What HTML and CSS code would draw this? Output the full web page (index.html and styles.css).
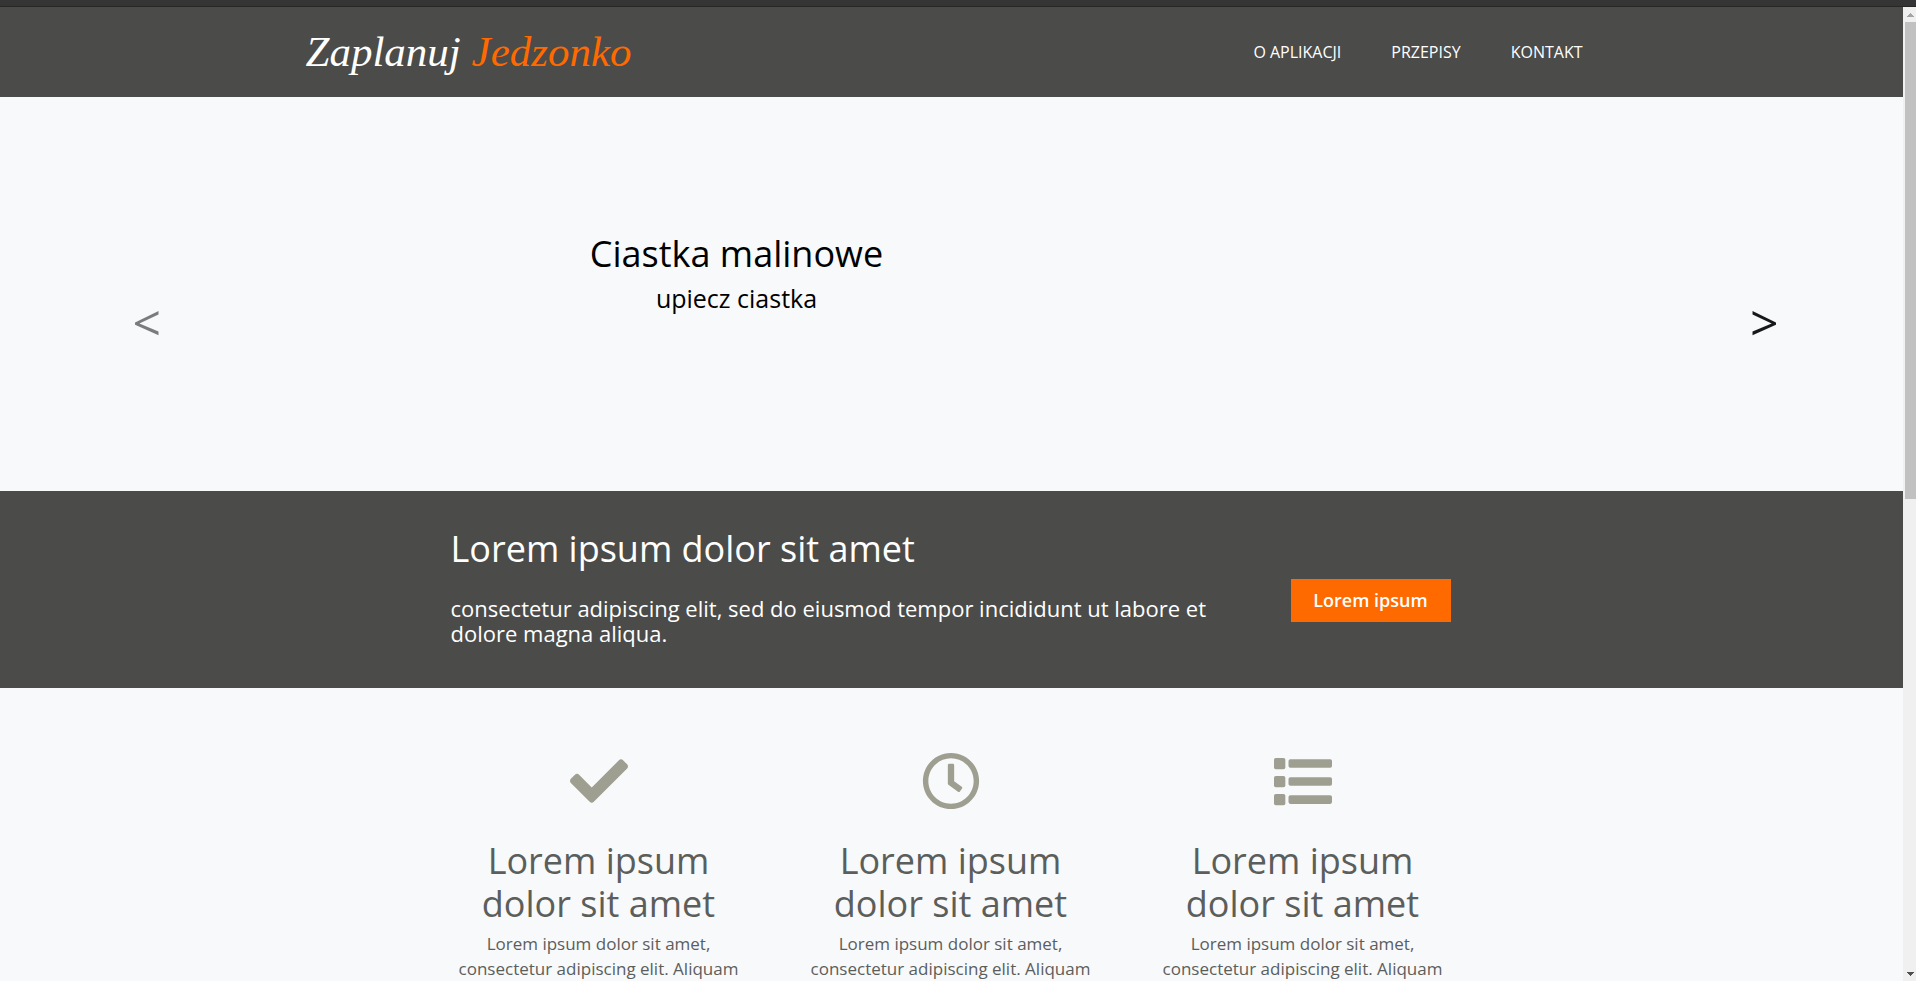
FILE: index.html
```html
<!DOCTYPE html>
<html lang="pl">
<head>
<meta charset="utf-8">
<title>Zaplanuj Jedzonko</title>
<link rel="stylesheet" href="styles.css">
</head>
<body>
<div class="window-edge"></div>
<div class="viewport">
  <div class="page">
    <header class="site-header">
      <div class="header-inner">
        <a class="logo" href="#">Zaplanuj <span class="logo-accent">Jedzonko</span></a>
        <nav class="main-nav">
          <a href="#about">O APLIKACJI</a>
          <a href="#recipes">PRZEPISY</a>
          <a href="#contact">KONTAKT</a>
        </nav>
      </div>
    </header>
    <section class="slider" id="recipes">
      <button class="slide-control slide-prev" type="button" aria-label="Poprzedni">&lt;</button>
      <div class="container slide">
        <div class="caption">
          <h1>Ciastka malinowe</h1>
          <p>upiecz ciastka</p>
        </div>
      </div>
      <button class="slide-control slide-next" type="button" aria-label="Następny">&gt;</button>
    </section>
    <section class="cta">
      <div class="container cta-inner">
        <div class="cta-text">
          <h2>Lorem ipsum dolor sit amet</h2>
          <p>consectetur adipiscing elit, sed do eiusmod tempor incididunt ut labore et dolore magna aliqua.</p>
        </div>
        <button class="cta-button" type="button">Lorem ipsum</button>
      </div>
    </section>
    <section class="about" id="about">
      <div class="container features">
        <article class="feature">
          <svg class="icon" viewBox="0 0 512 512" aria-hidden="true"><path d="M173.898 439.404l-166.4-166.4c-9.997-9.997-9.997-26.206 0-36.204l36.203-36.204c9.997-9.998 26.207-9.998 36.204 0L192 312.69 432.095 72.596c9.997-9.997 26.207-9.997 36.204 0l36.203 36.204c9.997 9.997 9.997 26.206 0 36.204l-294.4 294.401c-9.998 9.997-26.207 9.997-36.204-.001z"/></svg>
          <h2>Lorem ipsum dolor sit amet</h2>
          <p>Lorem ipsum dolor sit amet, consectetur adipiscing elit. Aliquam</p>
        </article>
        <article class="feature">
          <svg class="icon" viewBox="0 0 512 512" aria-hidden="true"><path d="M256 8C119 8 8 119 8 256s111 248 248 248 248-111 248-248S393 8 256 8zm0 448c-110.500 0-200-89.500-200-200S145.500 56 256 56s200 89.500 200 200-89.500 200-200 200zm61.800-104.400l-84.900-61.700c-3.100-2.300-4.900-5.900-4.900-9.700V116c0-6.600 5.400-12 12-12h32c6.600 0 12 5.400 12 12v141.700l66.800 48.600c5.400 3.900 6.500 11.400 2.600 16.800L334.600 349c-3.900 5.300-11.400 6.500-16.800 2.600z"/></svg>
          <h2>Lorem ipsum dolor sit amet</h2>
          <p>Lorem ipsum dolor sit amet, consectetur adipiscing elit. Aliquam</p>
        </article>
        <article class="feature">
          <svg class="icon" viewBox="0 0 512 512" aria-hidden="true"><rect x="0" y="52" width="100" height="100" rx="16"/><rect x="0" y="211" width="100" height="100" rx="16"/><rect x="0" y="370" width="100" height="100" rx="16"/><rect x="128" y="64" width="384" height="76" rx="16"/><rect x="128" y="223" width="384" height="76" rx="16"/><rect x="128" y="382" width="384" height="76" rx="16"/></svg>
          <h2>Lorem ipsum dolor sit amet</h2>
          <p>Lorem ipsum dolor sit amet, consectetur adipiscing elit. Aliquam</p>
        </article>
      </div>
    </section>
  </div>
  <div class="scrollbar" aria-hidden="true">
    <svg class="arrow arrow-up" viewBox="0 0 7 4" shape-rendering="crispEdges"><path d="M3 0h1v1h1v1h1v1h1v1H0V3h1V2h1V1h1z"/></svg>
    <div class="track"><div class="thumb"></div></div>
    <svg class="arrow arrow-down" viewBox="0 0 7 4" shape-rendering="crispEdges"><path d="M0 0h7v1H6v1H5v1H4v1H3V3H2V2H1V1H0z"/></svg>
  </div>
</div>
</body>
</html>
```
FILE: styles.css
```css
* {
  box-sizing: border-box;
}

body {
  margin: 0;
  height: 100vh;
  display: flex;
  flex-direction: column;
  overflow: hidden;
  background: #f8f9fb;
  font-family: "Open Sans", sans-serif;
}

h1, h2, p {
  margin: 0;
  font-weight: 400;
}

button {
  border: 0;
  font-family: inherit;
  cursor: pointer;
}

.window-edge {
  flex: none;
  height: 7px;
  background: #353535;
  border-bottom: 1px solid #282724;
}

.viewport {
  flex: 1;
  min-height: 0;
  display: flex;
}

.page {
  flex: 1;
  min-width: 0;
  overflow: hidden;
}

.container {
  width: 100%;
  max-width: 1000px;
  margin: 0 auto;
}

/* Header */
.site-header {
  background: #4b4b49;
}

.header-inner {
  max-width: 1300px;
  min-height: 90px;
  margin: 0 auto;
  padding: 0 19px 0 4px;
  display: flex;
  align-items: center;
  justify-content: space-between;
}

.logo {
  color: #fff;
  font-family: "Liberation Serif", serif;
  font-style: italic;
  font-size: 43px;
  line-height: 48px;
  text-decoration: none;
}

.logo-accent {
  color: #ff6a00;
}

.main-nav {
  display: flex;
  gap: 50px;
}

.main-nav a {
  color: #fff;
  font-size: 16px;
  line-height: 24px;
  text-decoration: none;
}

/* Slider */
.slider {
  display: flex;
  min-height: 394px;
}

.slide-control {
  flex: none;
  width: 15%;
  padding: 56px 0 0 8px;
  background: none;
  color: #000;
  font-size: 50px;
  line-height: 68px;
}

.slide-prev {
  opacity: 0.5;
}

.slide-next {
  opacity: 0.9;
}

.slide {
  padding-top: 133px;
}

.caption {
  width: 57%;
  text-align: center;
  color: #000;
}

.caption h1 {
  font-size: 36px;
  line-height: 48px;
}

.caption p {
  font-size: 25px;
  line-height: 40px;
}

/* Call to action */
.cta {
  padding-right: 2px;
  background: #4b4b49;
  color: #fff;
}

.cta-inner {
  min-height: 197px;
  display: flex;
  align-items: center;
  justify-content: space-between;
  padding-bottom: 6px;
}

.cta-text {
  flex: 0 1 760px;
}

.cta-text h2 {
  margin-bottom: 26px;
  font-size: 36px;
  line-height: 43px;
}

.cta-text p {
  font-size: 22px;
  line-height: 25px;
}

.cta-button {
  width: 160px;
  height: 43px;
  margin-top: 28px;
  padding: 0 0 2px;
  background: #ff6a00;
  color: #fff;
  font-size: 18px;
  font-weight: 600;
}

/* Features */
.about {
  padding: 64px 2px 0 0;
}

.features {
  display: grid;
  grid-template-columns: repeat(3, 1fr);
  gap: 56px;
  text-align: center;
  color: #5b5e5b;
}

.icon {
  display: block;
  width: 58px;
  height: 58px;
  margin: 0 auto 29px;
  fill: #9e9f90;
}

.feature h2 {
  margin-bottom: 6px;
  padding: 0 24px;
  font-size: 36px;
  line-height: 43px;
}

.feature p {
  font-size: 17px;
  line-height: 25px;
}

/* Scrollbar */
.scrollbar {
  flex: none;
  width: 13px;
  display: flex;
  flex-direction: column;
  background: #f0f0f0;
}

.arrow {
  flex: none;
  width: 7px;
  height: 4px;
  margin: 6px 0 5px 4px;
}

.arrow-up {
  fill: #a3a3a3;
}

.arrow-down {
  fill: #505050;
}

.track {
  flex: 1;
  padding-left: 2px;
}

.thumb {
  height: 50.5%;
  background: #c1c1c1;
}
```
